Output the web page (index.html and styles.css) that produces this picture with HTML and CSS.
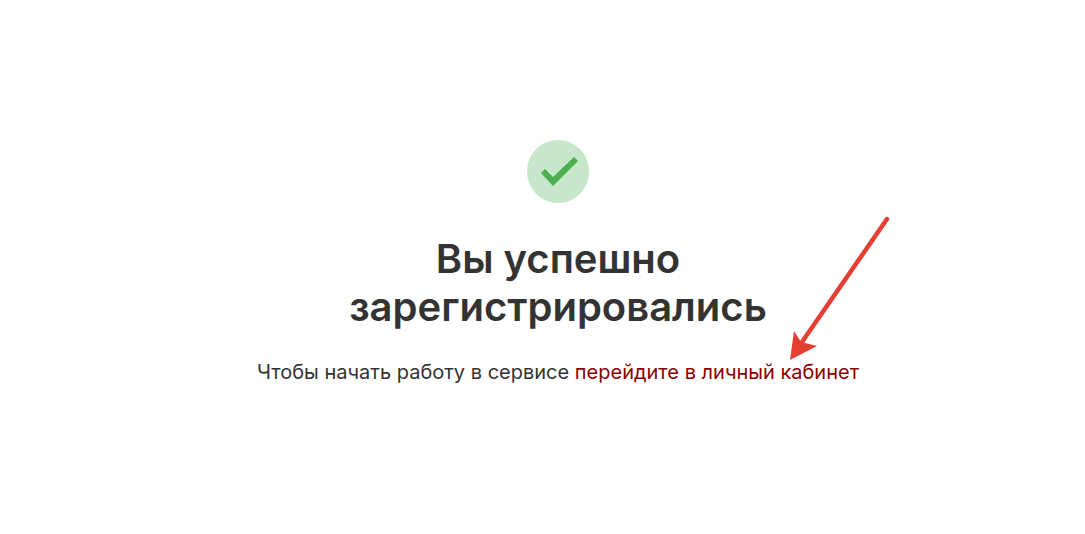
FILE: index.html
```html
<!DOCTYPE html>
<html lang="en">
<head>
  <meta charset="UTF-8" />
  <meta name="viewport" content="width=device-width, initial-scale=1.0" />
  <title>Регистрация</title>
  <link rel="stylesheet" href="styles.css">
</head>
<body>

  <!-- Success message -->
  <div class="success">
    <div class="success-icon">
      <svg width="63" height="63" viewBox="0 0 63 63">
        <path d="M14 33 L18 29 L26 37 L47 17 L51 21 L26 46 Z" fill="#4caf50" />
      </svg>
    </div>
    <h1>Вы успешно зарегистрировались</h1>
    <p>Чтобы начать работу в сервисе <a href="#" class="cabinet-link">перейдите в личный кабинет</a></p>
  </div>

  <!-- Red arrow drawn over the page -->
  <svg class="arrow" width="1085" height="534" viewBox="0 0 1085 534">
    <line x1="887" y1="219" x2="802" y2="342" stroke="#e53e33" stroke-width="4.500" stroke-linecap="round" />
    <polygon points="790,360 794,331 801,342 817,346" fill="#e53e33" />
  </svg>

</body>
</html>
```

FILE: styles.css
```css
/* Page layout */
body {
  margin: 0;
  height: 534px;
  background-color: #ffffff;
  font-family: Inter, "Noto Sans", sans-serif;
  color: #333333;
  overflow: hidden;
}

/* Centered success block */
.success {
  display: flex;
  flex-direction: column;
  align-items: center;
  padding: 140px 0 0 31px;
  text-align: center;
}

/* Round icon with the check mark */
.success-icon {
  width: 62.500px;
  height: 62.500px;
  border-radius: 50%;
  background-color: #c8e6c9;
}

.success-icon svg {
  display: block;
}

h1 {
  width: 480px;
  margin: 32.500px 0 0;
  font-size: 40px;
  line-height: 48px;
  font-weight: 600;
}

p {
  margin: 27px 0 0;
  font-size: 20px;
  line-height: 28px;
}

.cabinet-link {
  color: #8b0000;
  text-decoration: none;
}

/* Annotation arrow */
.arrow {
  position: absolute;
  top: 0;
  left: 0;
  pointer-events: none;
}
```
